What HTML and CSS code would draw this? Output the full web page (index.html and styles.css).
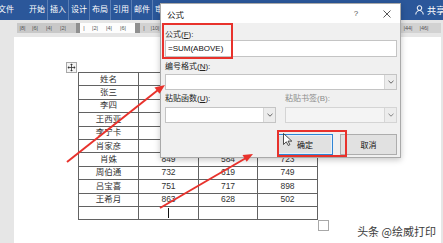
FILE: index.html
```html
<!DOCTYPE html>
<html lang="zh-CN">
<head>
    <meta charset="UTF-8">
    <meta name="viewport" content="width=device-width, initial-scale=1.0">
    <title>公式</title>
    <link rel="stylesheet" href="styles.css">
</head>
<body>
<div class="word">
    <!-- 功能区选项卡 -->
    <div class="ribbon">
        <span class="tab tab-file">文件</span>
        <span class="tab tab-first">开始</span>
        <span class="tab">插入</span>
        <span class="tab">设计</span>
        <span class="tab">布局</span>
        <span class="tab">引用</span>
        <span class="tab">邮件</span>
        <span class="tab tab-last">审阅</span>
        <span class="share">
            <svg width="9" height="10" viewBox="0 0 9 10"><circle cx="4.5" cy="3" r="2.3" fill="none" stroke="#fff" stroke-width="1"/><path d="M0.8 9.5c0-2.4 1.6-4 3.7-4s3.7 1.6 3.7 4" fill="none" stroke="#fff" stroke-width="1"/></svg>
            共享
        </span>
    </div>

    <!-- 标尺 -->
    <div class="ruler-bar">
        <div class="ruler">
            <div class="ruler-seg ruler-left">
                <span class="num num-first">|8|</span>
                <span class="num">|6|</span>
                <span class="num">|4|</span>
                <span class="num">|2|</span>
                <span class="indent"></span>
            </div>
            <div class="ruler-seg ruler-white">
                <span class="num num-tick">|</span>
                <span class="num">|2|</span>
                <span class="num">|4|</span>
                <span class="num">|6|</span>
            </div>
            <div class="ruler-marker"></div>
            <div class="ruler-seg ruler-right">
                <span class="num num-tick">|</span>
                <span class="num">|10|</span>
                <span class="num num-far">|44|</span>
                <span class="num">|46|</span>
            </div>
        </div>
    </div>

    <!-- 文档页面 -->
    <div class="doc">
        <div class="page">
            <div class="table-wrap">
                <span class="move-handle">
                    <svg width="9" height="9" viewBox="0 0 9 9"><path d="M4.5 1v7M1 4.5h7" stroke="#333" stroke-width="0.8"/><path d="M4.5 0.5l-1.4 1.6h2.8zM4.5 8.5l-1.4-1.6h2.8zM0.5 4.5l1.6-1.4v2.8zM8.5 4.5l-1.6-1.4v2.8z" fill="#333"/></svg>
                </span>
                <table class="score-table">
                    <colgroup>
                        <col class="c1"><col class="c2"><col class="c3"><col class="c4">
                    </colgroup>
                    <tr><td>姓名</td><td></td><td></td><td></td></tr>
                    <tr><td>张三</td><td></td><td></td><td></td></tr>
                    <tr><td>李四</td><td></td><td></td><td></td></tr>
                    <tr><td>王西亚</td><td></td><td></td><td></td></tr>
                    <tr><td>李宁卡</td><td></td><td></td><td></td></tr>
                    <tr><td>肖家彦</td><td></td><td></td><td></td></tr>
                    <tr><td>肖姝</td><td>849</td><td>584</td><td>723</td></tr>
                    <tr><td>周伯通</td><td>732</td><td>619</td><td>749</td></tr>
                    <tr><td>吕宝喜</td><td>751</td><td>717</td><td>898</td></tr>
                    <tr><td>王希月</td><td>863</td><td>628</td><td>502</td></tr>
                    <tr><td></td><td><span class="caret"></span></td><td></td><td></td></tr>
                </table>
                <span class="resize-handle"></span>
            </div>
        </div>
    </div>

    <!-- 公式对话框 -->
    <div class="dialog">
        <div class="dialog-title">
            <span class="title-text">公式</span>
            <span class="title-help">?</span>
            <span class="title-close">
                <svg width="8" height="8" viewBox="0 0 8 8"><path d="M0.5 0.5l7 7M7.5 0.5l-7 7" stroke="#444" stroke-width="0.9"/></svg>
            </span>
        </div>
        <div class="dialog-body">
            <div class="label label-first">公式(<u>F</u>):</div>
            <div class="field field-formula">=SUM(ABOVE)</div>

            <div class="label">编号格式(<u>N</u>):</div>
            <div class="field combo">
                <span class="combo-text"></span>
                <span class="combo-arrow"><svg width="6" height="4" viewBox="0 0 6 4"><path d="M0.5 0.8l2.5 2.4 2.5-2.4" fill="none" stroke="#555" stroke-width="0.9"/></svg></span>
            </div>

            <div class="paste-row">
                <div class="paste-col">
                    <div class="label">粘贴函数(<u>U</u>):</div>
                    <div class="field combo">
                        <span class="combo-text"></span>
                        <span class="combo-arrow"><svg width="6" height="4" viewBox="0 0 6 4"><path d="M0.5 0.8l2.5 2.4 2.5-2.4" fill="none" stroke="#555" stroke-width="0.9"/></svg></span>
                    </div>
                </div>
                <div class="paste-col">
                    <div class="label label-disabled">粘贴书签(B):</div>
                    <div class="field combo combo-disabled">
                        <span class="combo-text"></span>
                        <span class="combo-arrow"><svg width="6" height="4" viewBox="0 0 6 4"><path d="M0.5 0.8l2.5 2.4 2.5-2.4" fill="none" stroke="#777" stroke-width="0.9"/></svg></span>
                    </div>
                </div>
            </div>

            <div class="button-row">
                <span class="btn btn-ok">确定</span>
                <span class="btn">取消</span>
            </div>
        </div>
    </div>

    <!-- 标注 -->
    <div class="mark mark-formula"></div>
    <div class="mark mark-ok"></div>
    <svg class="pointer" width="9" height="13" viewBox="0 0 9 13"><path d="M0.5 0.5v11l2.8-2.7 2 3.7 1.6-0.8-1.9-3.6h3.8z" fill="#fff" stroke="#222" stroke-width="0.8"/></svg>
    <svg class="arrows" width="443" height="243" viewBox="0 0 443 243">
        <line x1="67" y1="162" x2="158" y2="90" stroke="#e8322c" stroke-width="2"/>
        <path d="M165 85l-10.5 2.5 5 6.2z" fill="#e8322c"/>
        <line x1="160" y1="208" x2="246" y2="158" stroke="#e8322c" stroke-width="2"/>
        <path d="M253 154l-10.5 0.9 4.2 6.8z" fill="#e8322c"/>
    </svg>
    <div class="watermark">头条 @绘威打印</div>
</div>
</body>
</html>
```

FILE: styles.css
```css
/* 页面基础 */
body {
    margin: 0;
    font-family: "Liberation Sans", "Noto Sans CJK SC", sans-serif;
}

.word {
    position: relative;
    width: 443px;
    height: 243px;
    overflow: hidden;
    background: #e6e6e6;
    display: flex;
    flex-direction: column;
}

/* 功能区 */
.ribbon {
    height: 20px;
    flex-shrink: 0;
    background: #2b579a;
    color: #fff;
    font-size: 8px;
    display: flex;
    align-items: center;
}

.tab {
    width: 20px;
    line-height: 20px;
    text-align: center;
    border-left: 1px solid #5a7db3;
    white-space: nowrap;
    flex-shrink: 0;
}

.tab-file {
    margin-left: -4px;
    border-left: none;
}

.tab-first {
    margin-left: 11px;
    border-left: none;
}

/* 被对话框挡住的选项卡只露出一半 */
.tab-last {
    width: 6px;
    padding-left: 2px;
    text-align: left;
    overflow: hidden;
}

.share {
    margin-left: auto;
    margin-right: -2px;
    display: flex;
    align-items: center;
    gap: 3px;
    font-size: 9px;
}

/* 标尺 */
.ruler-bar {
    height: 17px;
    flex-shrink: 0;
    padding-top: 3px;
    box-sizing: border-box;
}

.ruler {
    margin-left: 17px;
    width: 424px;
    height: 10px;
    display: flex;
    font-size: 5.5px;
    color: #555;
}

.ruler-seg {
    display: flex;
    align-items: center;
}

.ruler-left {
    width: 63px;
    background: #c8c8c8;
}

.ruler-white {
    width: 55px;
    background: #fdfdfd;
}

.ruler-right {
    flex: 1;
    background: #d2d2d2;
}

.ruler-marker {
    width: 5px;
    background: #8f8f8f;
}

.num {
    width: 14px;
    text-align: center;
    flex-shrink: 0;
}

.num-first {
    width: 11px;
}

.num-tick {
    width: 8px;
}

.num-far {
    margin-left: auto;
}

.ruler-right .num:last-child {
    margin-right: 8px;
    width: 18px;
}

.indent {
    width: 4px;
    height: 10px;
    margin-left: auto;
    background: #8f8f8f;
}

/* 文档页面 */
.doc {
    flex: 1;
    display: flex;
}

.page {
    margin-left: 14px;
    width: 427px;
    background: #fff;
    padding: 35px 0 0 64px;
    box-sizing: border-box;
}

.table-wrap {
    position: relative;
    width: 240px;
}

.score-table {
    border-collapse: collapse;
    table-layout: fixed;
    width: 240px;
    font-size: 8.5px;
    color: #333;
}

.c1 { width: 60px; }
.c2 { width: 60px; }
.c3 { width: 59px; }
.c4 { width: 60px; }

.score-table td {
    border: 1px solid #626262;
    height: 12.4px;
    padding: 0;
    line-height: 11px;
    text-align: center;
    white-space: nowrap;
    overflow: hidden;
}

.score-table td:nth-child(4) {
    border-left-color: #9a9a9a;
}

.caret {
    display: inline-block;
    width: 1px;
    height: 10px;
    background: #111;
    vertical-align: middle;
}

.move-handle {
    position: absolute;
    left: -12px;
    top: -10px;
    width: 9px;
    height: 9px;
    border: 1px solid #a8a8a8;
    background: #f4f4f4;
    display: flex;
}

.resize-handle {
    position: absolute;
    left: 100%;
    top: 100%;
    width: 9px;
    height: 9px;
    border: 1px solid #a8a8a8;
    background: #fff;
}

/* 公式对话框 */
.dialog {
    position: absolute;
    left: 160px;
    top: 3px;
    width: 241px;
    height: 155px;
    box-sizing: border-box;
    border: 1px solid #a9a9a9;
    background: #f0f0f0;
    box-shadow: 0 2px 6px rgba(0, 0, 0, 0.22);
    font-size: 8px;
    color: #222;
}

.dialog-title {
    height: 19px;
    background: #fff;
    display: flex;
    align-items: center;
}

.title-text {
    padding-left: 6px;
    font-size: 8.5px;
}

.title-help {
    margin-left: auto;
    width: 10px;
    margin-right: 18px;
    text-align: center;
    color: #555;
    font-size: 8px;
}

.title-close {
    width: 16px;
    margin-right: 5px;
    display: flex;
    justify-content: center;
}

.dialog-body {
    padding: 0 3px 0 4px;
}

.label {
    line-height: 11px;
    margin-top: 4px;
    white-space: nowrap;
}

.label u {
    text-decoration: underline;
}

.label-first {
    margin-top: 6px;
}

.label-disabled {
    color: #8c8c8c;
}

.field {
    background: #fff;
    border: 1px solid #c4c4c4;
    box-sizing: border-box;
}

.field-formula {
    height: 17px;
    line-height: 15px;
    padding-left: 2px;
    font-size: 8px;
    color: #111;
}

.combo {
    height: 16px;
    margin-top: 2px;
    display: flex;
}

.combo-text {
    flex: 1;
}

.combo-arrow {
    width: 11px;
    background: #ececec;
    border-left: 1px solid #d6d6d6;
    display: flex;
    align-items: center;
    justify-content: center;
}

.combo-disabled {
    background: #f4f4f4;
    border-color: #d4d4d4;
}

.paste-row {
    display: flex;
    gap: 9px;
}

.paste-col {
    width: 111px;
}

.paste-col .label {
    margin-top: 3px;
}

.paste-col .combo {
    margin-top: 3px;
}

.paste-col + .paste-col {
    width: 112px;
}

.button-row {
    margin-top: 11px;
    display: flex;
    justify-content: flex-end;
    gap: 7px;
}

.btn {
    width: 57px;
    height: 21px;
    box-sizing: border-box;
    border: 1px solid #adadad;
    background: #e1e1e1;
    display: flex;
    align-items: center;
    justify-content: center;
    color: #111;
}

.btn-ok {
    width: 56px;
    border-color: #2f84d4;
    box-shadow: inset 0 0 0 1px #e5f1fb;
}

/* 红色标注 */
.mark {
    position: absolute;
    border: 2px solid #e8322c;
    box-sizing: border-box;
}

.mark-formula {
    left: 162px;
    top: 23px;
    width: 71px;
    height: 36px;
}

.mark-ok {
    left: 277px;
    top: 130px;
    width: 70px;
    height: 27px;
}

.pointer {
    position: absolute;
    left: 283px;
    top: 133px;
}

.arrows {
    position: absolute;
    left: 0;
    top: 0;
    pointer-events: none;
}

.watermark {
    position: absolute;
    right: 7px;
    top: 223px;
    font-family: "Noto Sans CJK SC", sans-serif;
    font-size: 11px;
    color: #3c3c3c;
    text-shadow: 0 0 2px #fff, 0 0 1px #fff;
    white-space: nowrap;
}
```
